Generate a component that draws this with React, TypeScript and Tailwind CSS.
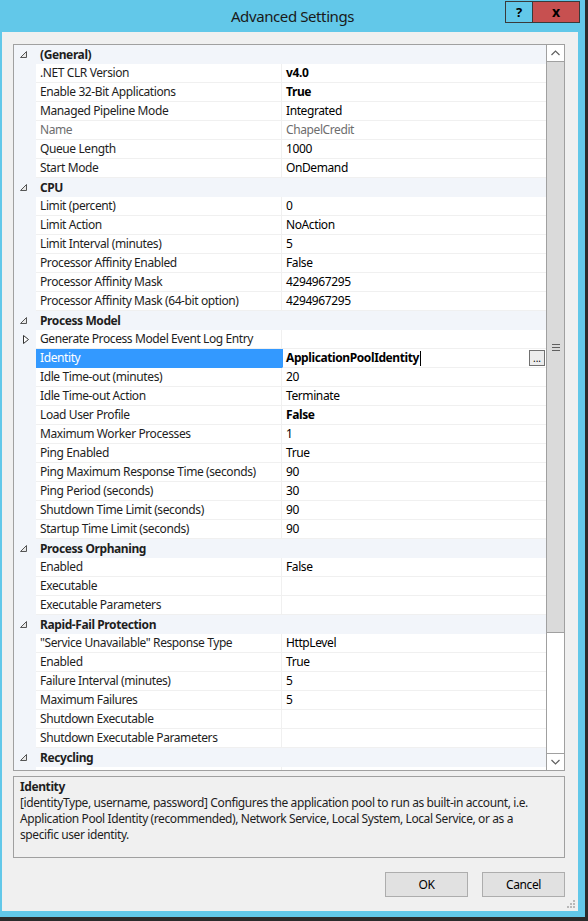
import React from 'react';

type Item = {
  name: string;
  value?: string;
  bold?: boolean;
  disabled?: boolean;
  collapsed?: boolean;
  selected?: boolean;
};
type Section = { title: string; items: Item[] };

const sections: Section[] = [
  {
    title: '(General)',
    items: [
      { name: '.NET CLR Version', value: 'v4.0', bold: true },
      { name: 'Enable 32-Bit Applications', value: 'True', bold: true },
      { name: 'Managed Pipeline Mode', value: 'Integrated' },
      { name: 'Name', value: 'ChapelCredit', disabled: true },
      { name: 'Queue Length', value: '1000' },
      { name: 'Start Mode', value: 'OnDemand' },
    ],
  },
  {
    title: 'CPU',
    items: [
      { name: 'Limit (percent)', value: '0' },
      { name: 'Limit Action', value: 'NoAction' },
      { name: 'Limit Interval (minutes)', value: '5' },
      { name: 'Processor Affinity Enabled', value: 'False' },
      { name: 'Processor Affinity Mask', value: '4294967295' },
      { name: 'Processor Affinity Mask (64-bit option)', value: '4294967295' },
    ],
  },
  {
    title: 'Process Model',
    items: [
      { name: 'Generate Process Model Event Log Entry', collapsed: true },
      { name: 'Identity', value: 'ApplicationPoolIdentity', bold: true, selected: true },
      { name: 'Idle Time-out (minutes)', value: '20' },
      { name: 'Idle Time-out Action', value: 'Terminate' },
      { name: 'Load User Profile', value: 'False', bold: true },
      { name: 'Maximum Worker Processes', value: '1' },
      { name: 'Ping Enabled', value: 'True' },
      { name: 'Ping Maximum Response Time (seconds)', value: '90' },
      { name: 'Ping Period (seconds)', value: '30' },
      { name: 'Shutdown Time Limit (seconds)', value: '90' },
      { name: 'Startup Time Limit (seconds)', value: '90' },
    ],
  },
  {
    title: 'Process Orphaning',
    items: [
      { name: 'Enabled', value: 'False' },
      { name: 'Executable', value: '' },
      { name: 'Executable Parameters', value: '' },
    ],
  },
  {
    title: 'Rapid-Fail Protection',
    items: [
      { name: '"Service Unavailable" Response Type', value: 'HttpLevel' },
      { name: 'Enabled', value: 'True' },
      { name: 'Failure Interval (minutes)', value: '5' },
      { name: 'Maximum Failures', value: '5' },
      { name: 'Shutdown Executable', value: '' },
      { name: 'Shutdown Executable Parameters', value: '' },
    ],
  },
  { title: 'Recycling', items: [] },
];

function ExpandedGlyph() {
  return (
    <svg width="7" height="7" viewBox="0 0 7 7">
      <path d="M6.5 0.5 L6.5 6.5 L0.5 6.5 Z" fill="#e8e8e8" stroke="#555" strokeWidth="1" />
    </svg>
  );
}

function CollapsedGlyph() {
  return (
    <svg width="6" height="9" viewBox="0 0 6 9">
      <path d="M0.5 0.5 L5.5 4.5 L0.5 8.5 Z" fill="#fff" stroke="#333" strokeWidth="1" />
    </svg>
  );
}

function CategoryRow({ title }: { title: string }) {
  return (
    <div className="flex h-[19px] shrink-0 items-center bg-[#f2f5fa]">
      <div className="flex w-[22px] justify-end pr-[9px]">
        <ExpandedGlyph />
      </div>
      <span className="pl-[4px] font-bold text-[#1e1e1e]">{title}</span>
    </div>
  );
}

function ItemRow({ item }: { item: Item }) {
  return (
    <div className="flex h-[19px] shrink-0 bg-[#f2f5fa]">
      <div className="flex w-[22px] items-center justify-end pr-[7px]">
        {item.collapsed && <CollapsedGlyph />}
      </div>
      <div
        className={
          item.selected
            ? 'flex w-[246px] items-center border-b border-[#3399ff] bg-[#3399ff] pl-[4px] text-white'
            : item.disabled
              ? 'flex w-[246px] items-center border-b border-r border-[#f0f0f0] bg-white pl-[4px] text-[#6d6d6d]'
              : 'flex w-[246px] items-center border-b border-r border-[#f0f0f0] bg-white pl-[4px] text-[#1e1e1e]'
        }
      >
        {item.name}
      </div>
      <div
        className={
          item.selected
            ? 'flex flex-1 items-center border-b border-l border-[#f0f0f0] border-l-[#3399ff] bg-white pl-[3px] pr-[1px]'
            : 'flex flex-1 items-center border-b border-[#f0f0f0] bg-white pl-[4px]'
        }
      >
        <span
          className={
            (item.bold ? 'font-bold ' : '') +
            (item.disabled ? 'text-[#6d6d6d]' : 'text-black')
          }
        >
          {item.value}
        </span>
        {item.selected && (
          <>
            <span className="ml-[1px] h-[15px] w-px bg-black" />
            <div className="ml-auto flex h-[16px] w-[16px] items-end justify-center border border-[#707070] bg-[#ececec] pb-[2px] text-[10px] leading-none tracking-normal text-black">
              ...
            </div>
          </>
        )}
      </div>
    </div>
  );
}

function ScrollBar() {
  return (
    <div className="flex w-[18px] shrink-0 flex-col border-l border-[#a0a0a0]">
      <div className="flex h-[17px] items-center justify-center border-b border-[#a0a0a0] bg-white">
        <svg width="9" height="6" viewBox="0 0 9 6">
          <path d="M0.5 5 L4.5 1 L8.5 5" fill="none" stroke="#606060" strokeWidth="1.2" />
        </svg>
      </div>
      <div className="flex h-[571px] items-center justify-center border-b border-[#a0a0a0] bg-[#dadada]">
        <div className="flex flex-col gap-[2px]">
          <div className="h-px w-[8px] bg-[#606060]" />
          <div className="h-px w-[8px] bg-[#606060]" />
          <div className="h-px w-[8px] bg-[#606060]" />
        </div>
      </div>
      <div className="flex-1 bg-white" />
      <div className="flex h-[17px] items-center justify-center border-t border-[#a0a0a0] bg-white">
        <svg width="9" height="6" viewBox="0 0 9 6">
          <path d="M0.5 1 L4.5 5 L8.5 1" fill="none" stroke="#606060" strokeWidth="1.2" />
        </svg>
      </div>
    </div>
  );
}

export default function App() {
  return (
    <div className="min-h-screen bg-[#2b2b2b] font-['Segoe_UI','Noto_Sans',sans-serif] text-[12px] leading-none tracking-[-0.4px]">
      <div className="flex h-[917px] w-[585px] flex-col bg-[#62c8e9]">
        {/* Title bar */}
        <div className="grid h-[32px] shrink-0 grid-cols-[1fr_auto_1fr]">
          <div />
          <div className="pt-[9px] text-[15px] text-[#1a1a1a]">Advanced Settings</div>
          <div className="flex justify-end pr-[5px] pt-[1px] tracking-normal">
            <div className="flex h-[22px] w-[28px] items-center justify-center border border-[#3a3a3a] text-[13px] font-bold text-black">
              ?
            </div>
            <div className="flex h-[22px] w-[47px] items-center justify-center border border-l-0 border-[#3a3a3a] bg-[#c75050] text-[14px] font-bold text-black">
              x
            </div>
          </div>
        </div>

        {/* Client area */}
        <div className="mb-[6px] ml-[2px] mr-[7px] flex flex-1 flex-col bg-[#f0f0f0] pl-[11px] pr-[13px] pt-[12px]">
          <div className="flex h-[727px] shrink-0 border border-[#a0a0a0] bg-[#f2f5fa]">
            <div className="flex flex-1 flex-col overflow-hidden">
              {sections.map((s) => (
                <React.Fragment key={s.title}>
                  <CategoryRow title={s.title} />
                  {s.items.map((it, i) => (
                    <ItemRow key={s.title + i} item={it} />
                  ))}
                </React.Fragment>
              ))}
              <div className="flex h-[19px] shrink-0">
                <div className="w-[22px]" />
                <div className="w-[246px] border-r border-[#f0f0f0] bg-white" />
                <div className="flex-1 bg-white" />
              </div>
            </div>
            <ScrollBar />
          </div>

          {/* Description */}
          <div className="mt-[5px] h-[82px] shrink-0 whitespace-nowrap border border-[#a0a0a0] px-[6px] pt-[2px] text-[#1e1e1e]">
            <div className="font-bold leading-[16px]">Identity</div>
            <p className="leading-[16px]">
              [identityType, username, password] Configures the application pool to run as built-in account, i.e.
              <br />
              Application Pool Identity (recommended), Network Service, Local System, Local Service, or as a
              <br />
              specific user identity.
            </p>
          </div>

          {/* Buttons */}
          <div className="mt-[14px] flex justify-end gap-[14px]">
            <button className="h-[25px] w-[83px] border border-[#adadad] bg-[#e1e1e1] text-[12px] text-black">
              OK
            </button>
            <button className="h-[25px] w-[83px] border border-[#adadad] bg-[#e1e1e1] text-[12px] text-black">
              Cancel
            </button>
          </div>

          <div className="mt-auto flex justify-end pb-[2px]">
            <svg width="10" height="10" viewBox="0 0 10 10" className="-mr-[11px]">
              <rect x="7" y="1" width="2" height="2" fill="#b8b8b8" />
              <rect x="4" y="4" width="2" height="2" fill="#b8b8b8" />
              <rect x="7" y="4" width="2" height="2" fill="#b8b8b8" />
              <rect x="1" y="7" width="2" height="2" fill="#b8b8b8" />
              <rect x="4" y="7" width="2" height="2" fill="#b8b8b8" />
              <rect x="7" y="7" width="2" height="2" fill="#b8b8b8" />
            </svg>
          </div>
        </div>
      </div>
    </div>
  );
}
